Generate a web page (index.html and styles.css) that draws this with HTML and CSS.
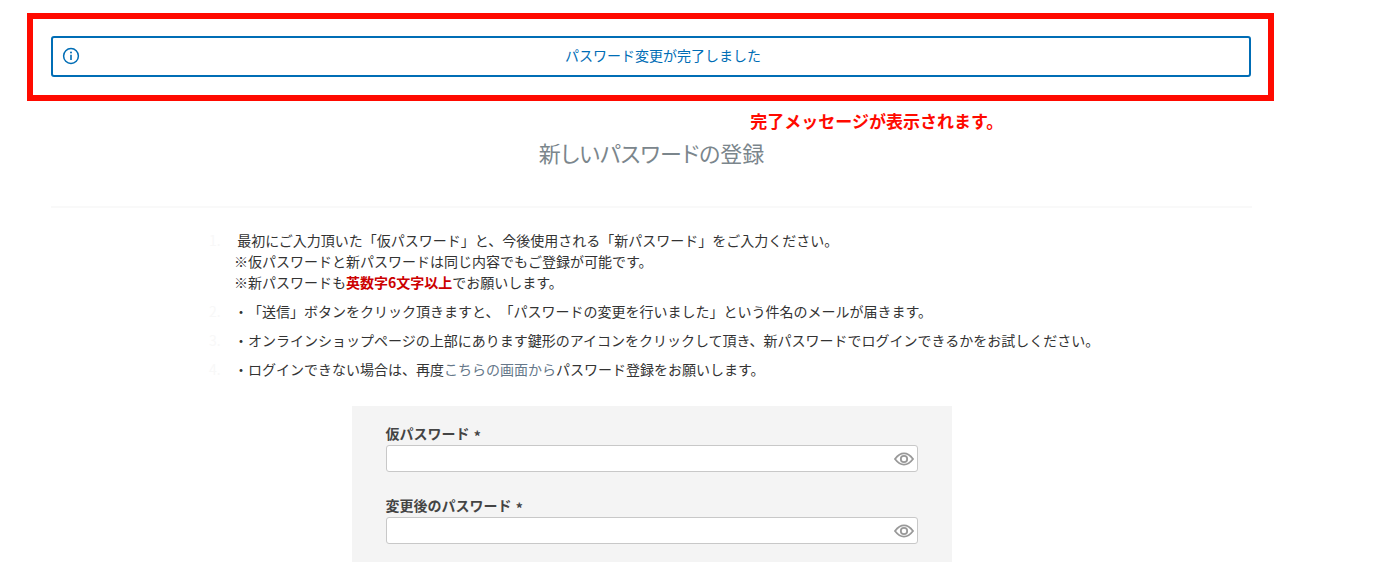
FILE: index.html
```html
<!DOCTYPE html>
<html lang="ja">
<head>
    <meta charset="UTF-8">
    <meta name="viewport" content="width=device-width, initial-scale=1.0">
    <title>新しいパスワードの登録</title>
    <link rel="stylesheet" href="styles.css">
</head>
<body>
    <div class="message-frame">
        <div class="message" role="status">
            <svg class="message-icon" viewBox="0 0 18 18" aria-hidden="true">
                <circle cx="9" cy="9" r="7.4" fill="none" stroke="currentColor" stroke-width="1.5"/>
                <circle cx="9" cy="5.6" r="1" fill="currentColor"/>
                <path d="M9 7.8v5.2" stroke="currentColor" stroke-width="1.6"/>
            </svg>
            <p class="message-text">パスワード変更が完了しました</p>
        </div>
    </div>
    <p class="note">完了メッセージが表示されます。</p>

    <main class="container">
        <h1 class="page-title">新しいパスワードの登録</h1>

        <ol class="guide">
            <li class="guide-item">
                <p class="guide-text">&nbsp;最初にご入力頂いた「仮パスワード」と、今後使用される「新パスワード」をご入力ください。<br>※仮パスワードと新パスワードは同じ内容でもご登録が可能です。<br>※新パスワードも<strong class="guide-strong">英数字6文字以上</strong>でお願いします。</p>
            </li>
            <li class="guide-item">
                <p class="guide-text">・「送信」ボタンをクリック頂きますと、「パスワードの変更を行いました」という件名のメールが届きます。</p>
            </li>
            <li class="guide-item">
                <p class="guide-text">・オンラインショップページの上部にあります鍵形のアイコンをクリックして頂き、新パスワードでログインできるかをお試しください。</p>
            </li>
            <li class="guide-item">
                <p class="guide-text">・ログインできない場合は、再度<a class="guide-link" href="#">こちらの画面から</a>パスワード登録をお願いします。</p>
            </li>
        </ol>

        <form class="password-form">
            <div class="field">
                <label class="field-label" for="temp-password">仮パスワード <span class="required">*</span></label>
                <div class="field-box">
                    <input class="field-input" type="password" id="temp-password">
                    <button class="eye-button" type="button">
                        <svg class="eye-icon" viewBox="0 0 20 14" aria-hidden="true">
                            <path d="M1 7C4 3 6.800 1.400 10 1.400S16 3 19 7C16 11 13.200 12.600 10 12.600S4 11 1 7Z"/>
                            <circle cx="10" cy="7" r="3.2"/>
                        </svg>
                    </button>
                </div>
            </div>
            <div class="field">
                <label class="field-label" for="new-password">変更後のパスワード <span class="required">*</span></label>
                <div class="field-box">
                    <input class="field-input" type="password" id="new-password">
                    <button class="eye-button" type="button">
                        <svg class="eye-icon" viewBox="0 0 20 14" aria-hidden="true">
                            <path d="M1 7C4 3 6.800 1.400 10 1.400S16 3 19 7C16 11 13.200 12.600 10 12.600S4 11 1 7Z"/>
                            <circle cx="10" cy="7" r="3.2"/>
                        </svg>
                    </button>
                </div>
            </div>
        </form>
    </main>

    <script>
        // Toggle password visibility
        document.querySelectorAll(".eye-button").forEach((button) => {
            button.addEventListener("click", () => {
                const input = button.previousElementSibling;
                input.type = input.type === "password" ? "text" : "password";
            });
        });
    </script>
</body>
</html>
```
FILE: styles.css
```css
* {
    box-sizing: border-box;
}

body {
    margin: 0;
    padding: 13px 110px 0 27px;
    background-color: #fff;
    color: #333;
    font-family: "Noto Sans CJK JP", sans-serif;
    font-size: 14px;
    line-height: 21px;
    text-spacing-trim: space-all;
}

p {
    margin: 0;
}

.message-frame {
    padding: 17px 17px 18px 18px;
    border: 6px solid #ff0a00;
}

.message {
    display: flex;
    align-items: center;
    padding: 7px 9px 9px;
    border: 2px solid #006db5;
    border-radius: 3px;
    color: #006db5;
}

.message-icon {
    width: 18px;
    height: 18px;
}

.message-text {
    flex: 1;
    margin-left: 6px;
    text-align: center;
}

.note {
    padding: 8px 0 0 58%;
    color: #ff0a00;
    font-size: 17px;
    font-weight: bold;
    line-height: 24px;
}

.container {
    margin: 0 22px 0 24px;
}

.page-title {
    margin: 0;
    padding: 4px 0 39px;
    border-bottom: 2px solid #f9f9f9;
    color: #7b868c;
    font-size: 22px;
    font-weight: normal;
    font-feature-settings: "palt";
    line-height: 30px;
    text-align: center;
}

.guide {
    margin: 22px 0 26px;
    padding: 0 0 0 158px;
    list-style: none;
    counter-reset: guide;
}

.guide-item {
    display: flex;
    margin-bottom: 8px;
    counter-increment: guide;
}

.guide-item::before {
    content: counter(guide) ".";
    width: 25px;
    color: #f8f8f8;
}

.guide-text {
    flex: 1;
}

.guide-strong {
    color: #cc0000;
}

.guide-link {
    color: #66788a;
    text-decoration: none;
}

.password-form {
    max-width: 600px;
    margin: 0 auto;
    padding: 17px 34px 18px;
    background-color: #f4f4f4;
}

.field + .field {
    margin-top: 23px;
}

.field-label {
    display: block;
    margin-bottom: 2px;
    color: #444;
    font-weight: bold;
    line-height: 20px;
}

.required {
    position: relative;
    top: 3px;
    margin-left: 1px;
}

.field-box {
    position: relative;
}

.field-input {
    display: block;
    width: 100%;
    height: 27px;
    padding: 0 32px 0 8px;
    border: 1px solid #c8c8c8;
    border-radius: 3px;
    background-color: #fff;
    font-size: 14px;
}

.eye-button {
    position: absolute;
    top: 0;
    right: 4px;
    display: flex;
    align-items: center;
    height: 100%;
    padding: 0;
    border: none;
    background: none;
    cursor: pointer;
}

.eye-icon {
    width: 20px;
    height: 14px;
    fill: none;
    stroke: #999;
    stroke-width: 1.8;
}
```
